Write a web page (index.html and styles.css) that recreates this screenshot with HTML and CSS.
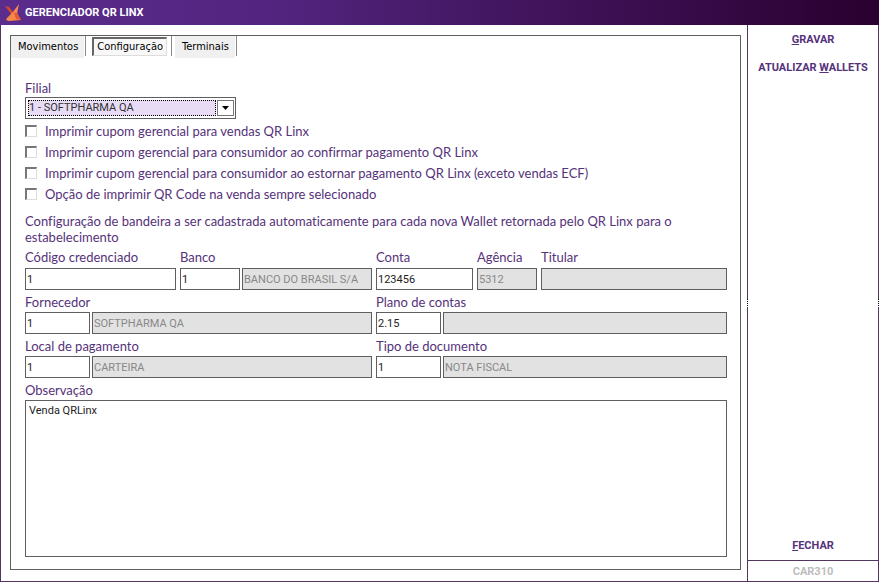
FILE: index.html
```html
<!DOCTYPE html>
<html lang="pt-BR">
<head>
<meta charset="utf-8">
<meta name="viewport" content="width=device-width, initial-scale=1">
<title>Gerenciador QR Linx</title>
<link rel="stylesheet" href="styles.css">
</head>
<body>
<header class="titlebar">
  <svg class="logo" viewBox="0 0 17 18" aria-hidden="true">
    <path d="M0 2 L4 3 L8 8 L7 11 Z" fill="#d9482b"/>
    <path d="M14 0 L12 10 L7 9 Z" fill="#f08a50"/>
    <path d="M7 8 L12 9 L5 12 Z" fill="#ee6a3a"/>
    <path d="M7 9 L12 9 L16 16 L4 17 L1 16 L2 14 Z" fill="#f58a48"/>
    <path d="M9 9 L12 9 L16 16 L11 15 Z" fill="#e05a34"/>
  </svg>
  <h1 class="title">GERENCIADOR QR LINX</h1>
</header>
<div class="window">
  <main class="main">
    <div class="panel">
      <nav class="tabs" role="tablist">
        <button class="tab" type="button" role="tab">Movimentos</button>
        <button class="tab tab-active" type="button" role="tab" aria-selected="true">Configuração</button>
        <button class="tab" type="button" role="tab">Terminais</button>
      </nav>
      <form class="form">
        <label class="label" for="filial">Filial</label>
        <div class="combo">
          <select id="filial" class="combo-select"><option>1 - SOFTPHARMA QA</option></select>
          <span class="combo-arrow"><svg width="7" height="4" viewBox="0 0 7 4" aria-hidden="true"><path d="M0 0H7L3.500 4Z"/></svg></span>
        </div>
        <div class="checks">
          <label class="check"><input type="checkbox">Imprimir cupom gerencial para vendas QR Linx</label>
          <label class="check"><input type="checkbox">Imprimir cupom gerencial para consumidor ao confirmar pagamento QR Linx</label>
          <label class="check"><input type="checkbox">Imprimir cupom gerencial para consumidor ao estornar pagamento QR Linx (exceto vendas ECF)</label>
          <label class="check"><input type="checkbox">Opção de imprimir QR Code na venda sempre selecionado</label>
        </div>
        <p class="note">Configuração de bandeira a ser cadastrada automaticamente para cada nova Wallet retornada pelo QR Linx para o estabelecimento</p>
        <div class="fields">
          <div class="half half-bank">
            <div><label class="label" for="codigo">Código credenciado</label><input id="codigo" class="input" value="1"></div>
            <div><label class="label" for="banco">Banco</label>
              <div class="pair pair-bank"><input id="banco" class="input" value="1"><input class="input" aria-label="Nome do banco" value="BANCO DO BRASIL S/A" disabled></div>
            </div>
          </div>
          <div class="half half-account">
            <div><label class="label" for="conta">Conta</label><input id="conta" class="input" value="123456"></div>
            <div><label class="label" for="agencia">Agência</label><input id="agencia" class="input" value="5312" disabled></div>
            <div><label class="label" for="titular">Titular</label><input id="titular" class="input" disabled></div>
          </div>
          <div><label class="label" for="fornecedor">Fornecedor</label>
            <div class="pair"><input id="fornecedor" class="input" value="1"><input class="input" aria-label="Nome do fornecedor" value="SOFTPHARMA QA" disabled></div>
          </div>
          <div><label class="label" for="plano">Plano de contas</label>
            <div class="pair"><input id="plano" class="input" value="2.15"><input class="input" aria-label="Nome do plano" disabled></div>
          </div>
          <div><label class="label" for="local">Local de pagamento</label>
            <div class="pair"><input id="local" class="input" value="1"><input class="input" aria-label="Nome do local" value="CARTEIRA" disabled></div>
          </div>
          <div><label class="label" for="tipo">Tipo de documento</label>
            <div class="pair"><input id="tipo" class="input" value="1"><input class="input" aria-label="Nome do tipo" value="NOTA FISCAL" disabled></div>
          </div>
        </div>
        <label class="label label-obs" for="obs">Observação</label>
        <textarea id="obs" class="area">Venda QRLinx</textarea>
      </form>
    </div>
  </main>
  <aside class="side">
    <div class="actions">
      <button class="action" type="button"><u>G</u>RAVAR</button>
      <button class="action" type="button">ATUALIZAR <u>W</u>ALLETS</button>
      <button class="action action-close" type="button"><u>F</u>ECHAR</button>
    </div>
    <footer class="code">CAR310</footer>
  </aside>
</div>
</body>
</html>
```
FILE: styles.css
```css
* { box-sizing: border-box; }

:root {
  --purple: #55327a;
  --frame: #52365f;
  --line: #5f5f63;
  --compact: "Roboto", sans-serif;
}

body {
  margin: 0;
  min-height: 100vh;
  display: flex;
  flex-direction: column;
  background: #fff;
  color: var(--purple);
  font: 13px/16px "Lato", sans-serif;
  font-variant-ligatures: none;
}

button, input, select, textarea { font: inherit; color: inherit; margin: 0; }

.titlebar {
  display: flex;
  align-items: center;
  gap: 3px;
  height: 25px;
  padding: 0 5px;
  background: linear-gradient(90deg, #5b2c8c 0%, #532580 30%, #3c0f52 70%, #29002f 100%);
}
.logo { width: 17px; height: 18px; }
.title { margin: 0; color: #fff; font: bold 11px/16px var(--compact); }

.window {
  flex: 1;
  display: flex;
  border: 1px solid var(--frame);
  border-top: 0;
}
.main { flex: 1; display: flex; min-width: 0; padding: 10px 6px 11px 9px; }
.panel {
  flex: 1;
  display: flex;
  flex-direction: column;
  min-width: 0;
  border: 1px solid var(--line);
}

.tabs { display: flex; gap: 8px; height: 22px; }
.tab {
  position: relative;
  height: 22px;
  padding: 0 6px 1px 7px;
  border: 0;
  background: #f0f0f0;
  color: #000;
  font: 11px/16px "DejaVu Sans Condensed", sans-serif;
}
.tab::after {
  content: "";
  position: absolute;
  top: 0;
  right: -2px;
  width: 1px;
  height: 20px;
  background: #8a8a8a;
}
.tab-active {
  height: 19px;
  margin-top: 1px;
  padding: 0 3px;
  border: 1px solid #ddd;
  border-top: 2px solid #666;
  border-left: 2px solid #666;
  background: #f8f8f8;
}
.tab-active::after { top: -3px; right: -6px; }

.form { flex: 1; display: flex; flex-direction: column; padding: 22px 13px 12px 14px; }
.label { display: block; height: 17px; line-height: 17px; }

.combo {
  display: flex;
  gap: 1px;
  width: 211px;
  height: 22px;
  padding: 2px 1px 2px 2px;
  border: 1px solid var(--line);
}
.combo-select {
  appearance: none;
  flex: 1;
  min-width: 0;
  padding: 0;
  border: 1px dotted #000;
  border-radius: 0;
  background: #e7dcf3;
  color: #333;
  font: 11px/14px var(--compact);
}
.combo-arrow {
  display: flex;
  align-items: center;
  justify-content: center;
  width: 17px;
  border: 1px solid #777;
  pointer-events: none;
}

.checks { margin-top: 1px; }
.check { display: flex; align-items: center; gap: 8px; height: 21px; }
.check input {
  appearance: none;
  width: 12px;
  height: 12px;
  border: 1px solid #ddd;
  border-top: 2px solid #777;
  border-left: 2px solid #777;
}

.note { margin: 9px 0 4px; padding-right: 40px; }

.fields { display: grid; grid-template-columns: 347fr 351fr; gap: 4px; }
.fields .label { height: 19px; }
.fields > div:nth-child(n + 3) .label { height: 18px; }
.half { display: grid; gap: 4px; }
.half-bank { grid-template-columns: 151fr 192fr; }
.half-account { grid-template-columns: 97fr 60fr 186fr; }
.pair { display: grid; grid-template-columns: 65px 1fr; gap: 2px; }
.pair-bank { grid-template-columns: 60px 1fr; }
.input {
  display: block;
  width: 100%;
  min-width: 0;
  height: 22px;
  padding: 0 1px;
  border: 1px solid var(--line);
  background: #fff;
  color: #222;
  font: 11px/16px var(--compact);
}
.input:disabled { background: #e2e2e2; color: #888; }

.label-obs { height: 18px; margin-top: 4px; }
.area {
  flex: 1;
  width: 100%;
  min-height: 60px;
  padding: 2px 3px;
  border: 1px solid var(--line);
  resize: none;
  color: #222;
  font: 11px/16px var(--compact);
}

.side {
  position: relative;
  display: flex;
  flex-direction: column;
  width: 131px;
  border-left: 1px solid var(--frame);
}
/* Resize grips on both edges of the sidebar */
.side::before,
.side::after {
  content: "";
  position: absolute;
  top: calc(50% - 4px);
  left: -1px;
  width: 1px;
  height: 8px;
  background: repeating-linear-gradient(#000 0 1px, #fff 1px 2px);
}
.side::after { left: auto; right: -1px; }
.actions { flex: 1; display: flex; flex-direction: column; padding-top: 1px; }
.action {
  height: 28px;
  padding: 0;
  border: 0;
  background: none;
  color: var(--purple);
  font: bold 11px/16px var(--compact);
}
.action-close { margin-top: auto; }
.code {
  height: 21px;
  border-top: 1px solid var(--frame);
  color: #bcbcbc;
  font: bold 11px/21px var(--compact);
  text-align: center;
}
```
